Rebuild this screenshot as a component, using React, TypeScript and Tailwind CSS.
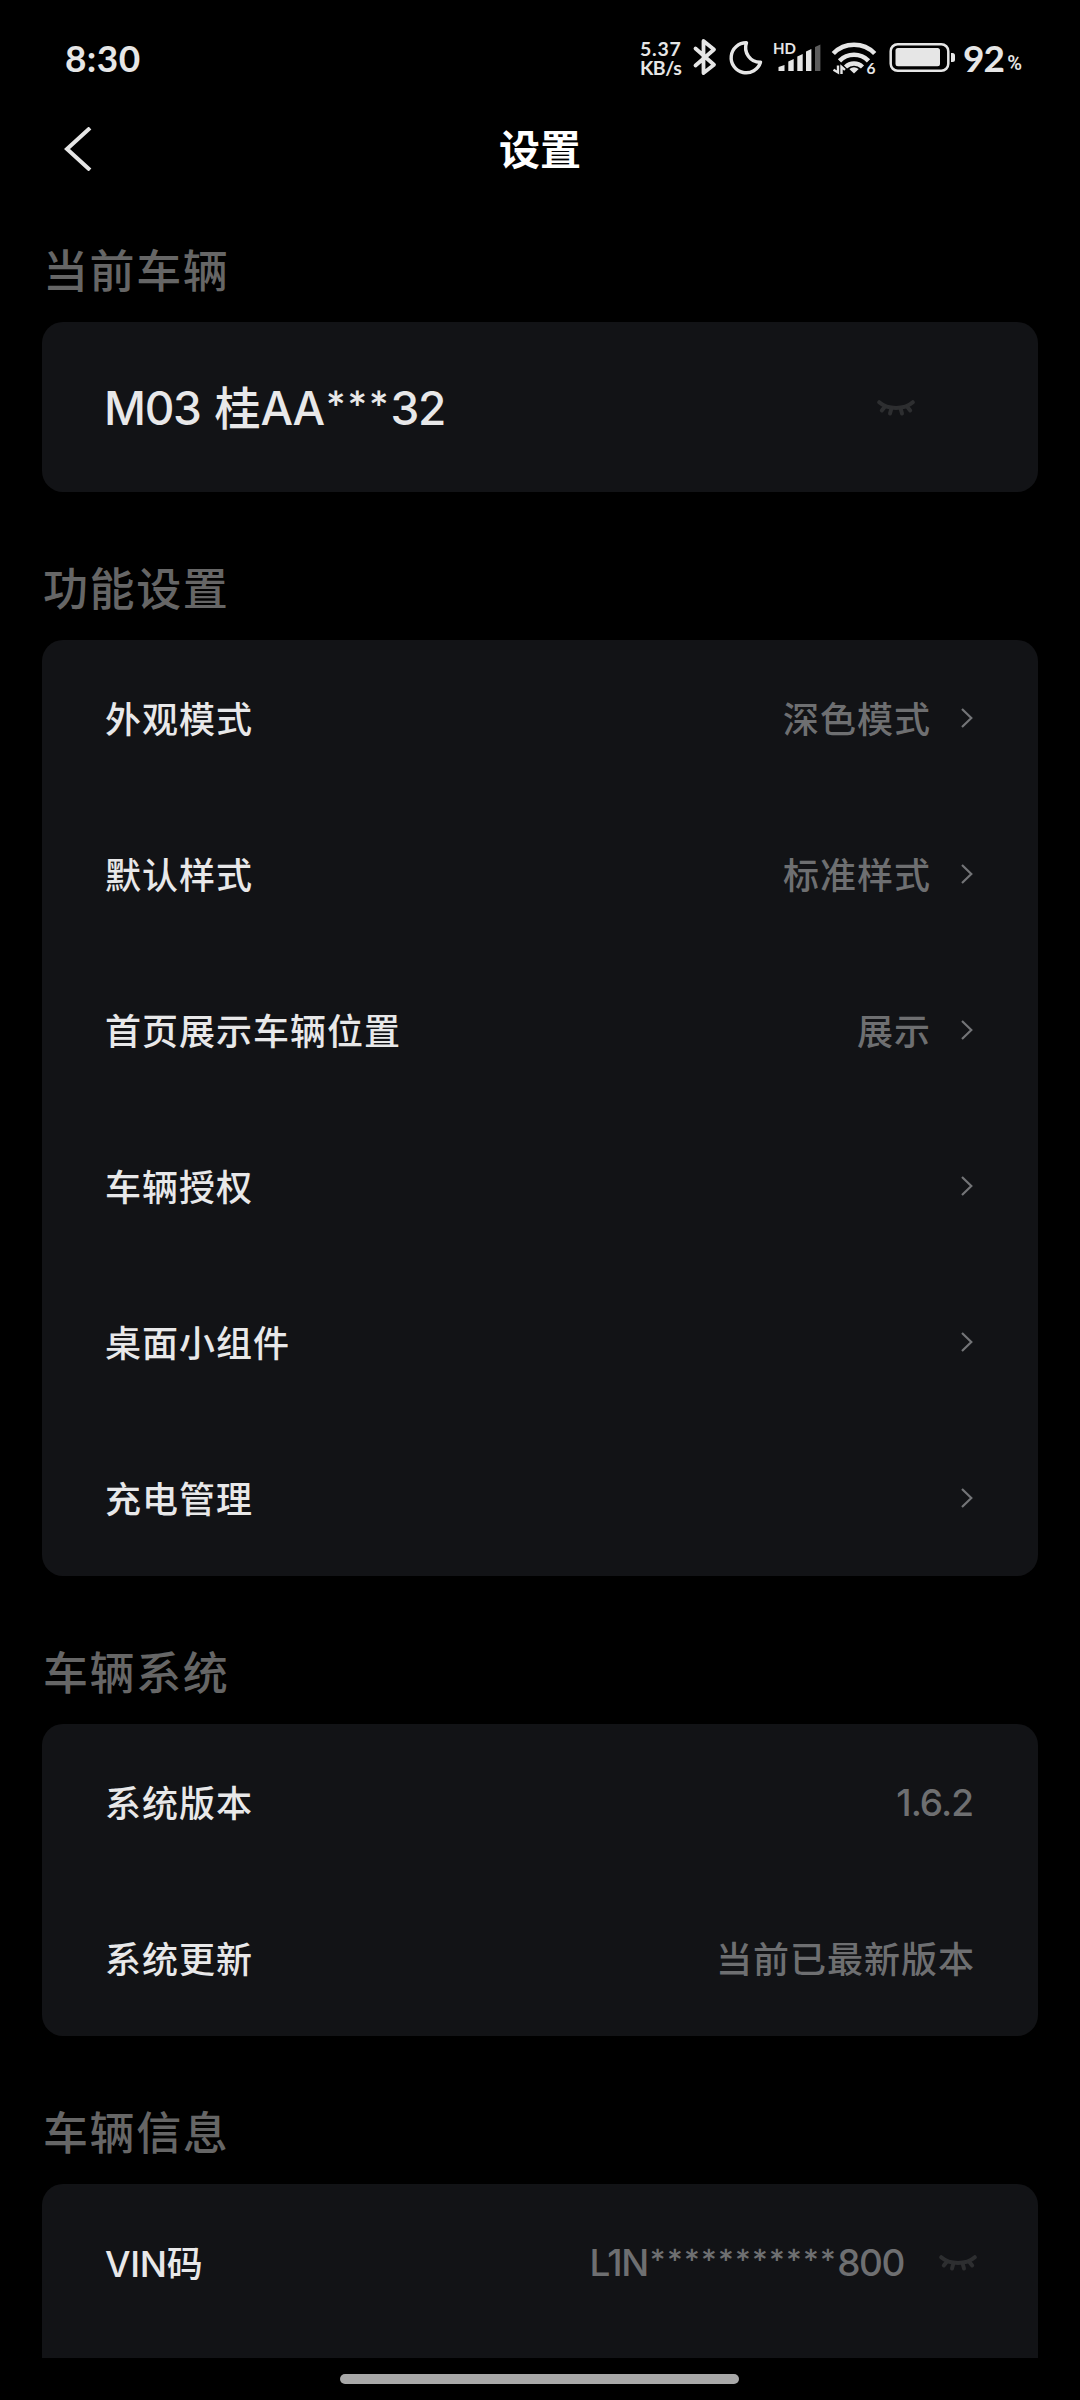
import type { ReactNode } from "react";

type SettingRow = {
  label: string;
  value?: string;
  arrow?: boolean;
};

const featureRows: SettingRow[] = [
  { label: "外观模式", value: "深色模式", arrow: true },
  { label: "默认样式", value: "标准样式", arrow: true },
  { label: "首页展示车辆位置", value: "展示", arrow: true },
  { label: "车辆授权", arrow: true },
  { label: "桌面小组件", arrow: true },
  { label: "充电管理", arrow: true },
];

function ClosedEye() {
  return (
    <svg className="mt-[2px]" width="38" height="16" viewBox="0 0 38 16" fill="none" stroke="#2d2e30" strokeWidth="4" strokeLinecap="round">
      <path d="M2.2 2.2C6.5 6 12.5 7.9 19 7.9S31.500 6 35.800 2.200" />
      <path d="M8 6.500L4.800 10.500M14.500 8L13 13.500M23.500 8L25 13.500M30 6.500L33.200 10.500" />
    </svg>
  );
}

function Chevron() {
  return (
    <svg width="12" height="20" viewBox="0 0 12 20" fill="none" stroke="#737477" strokeWidth="2.2">
      <path d="M1 1L10.300 10L1 19" />
    </svg>
  );
}

function StatusBar() {
  return (
    <div className="flex h-[116px] shrink-0 items-start justify-between pl-[65px] pr-[58px] pt-[36px] text-[#e6e6e6]">
      <span className="text-[37px] font-bold leading-[44px] tracking-[0.4px]">8:30</span>
      <div className="flex h-[44px] items-start">
        <div className="w-[52px] pt-[3px] text-[19.500px] font-bold leading-[19px]">
          <div className="tracking-[0.8px]">5.37</div>
          <div className="tracking-[-0.4px]">KB/s</div>
        </div>
        <svg width="269" height="44" viewBox="692 36 269 44" fill="none" stroke="#e6e6e6">
          {/* bluetooth */}
          <path d="M695.500 48.500L714 64.800L703.500 73V41L714 49.500L695.500 65.500" strokeWidth="3.800" strokeLinejoin="round" strokeLinecap="round" />
          {/* do not disturb */}
          <path d="M746.500 42.800A15 15 0 1 0 760.500 62.200A14.500 14.500 0 0 1 746.500 42.800Z" strokeWidth="3.400" strokeLinejoin="round" />
          {/* signal */}
          <g stroke="none" fill="#e6e6e6">
            <text x="773" y="54" fontSize="15" fontWeight="700">HD</text>
            <path d="M778.500 67l6-2v6h-6z" />
            <path d="M788.300 61.500l5.400-2.500v12h-5.400z" />
            <path d="M797.300 56.500l5.400-2.500v17h-5.400z" />
            <path d="M806 51.500l5.400-2.500v22h-5.400z" />
            <path d="M815 47l5.400-2.500v26.500h-5.400z" fill="#5c5c5c" />
          </g>
          {/* wifi */}
          <path d="M833.300 53.500A29 29 0 0 1 874.700 53.500" strokeWidth="4.600" />
          <path d="M839.500 60.800A20.500 20.500 0 0 1 868.500 60.800" strokeWidth="4.600" />
          <path d="M845.500 67A12 12 0 0 1 862.500 67" strokeWidth="4.400" />
          <path d="M854 73.500L849.300 69Q854 65.500 858.700 69Z" stroke="none" fill="#e6e6e6" />
          <path d="M838 65.500V72.500L833.500 69.800M841.500 74V66.800L845 69.800" strokeWidth="2.400" />
          <text x="866.500" y="74" fontSize="15.500" fontWeight="700" stroke="none" fill="#e6e6e6">6</text>
          {/* battery */}
          <rect x="890.700" y="44.200" width="57.600" height="26.600" rx="7" strokeWidth="2.500" />
          <rect x="895.500" y="48" width="44.500" height="18.300" rx="2.500" stroke="none" fill="#e6e6e6" />
          <path d="M951 53h1.500q2.500 0 2.500 2.500v4q0 2.500-2.500 2.500h-1.500z" stroke="none" fill="#e6e6e6" />
        </svg>
        <span className="pl-[2px] text-[37px] font-bold leading-[44px] tracking-[-0.8px]">92</span>
        <span className="mt-[14px] pl-[3px] font-[Roboto] text-[20px] font-semibold leading-[26px]">%</span>
      </div>
    </div>
  );
}

function Section({ title, children }: { title: string; children: ReactNode }) {
  return (
    <section className="shrink-0">
      <h2 className="flex h-[148px] items-center pl-px pt-[46px] text-[45px] font-medium leading-[60px] tracking-[1.6px] text-[#666666]">
        {title}
      </h2>
      <div className="rounded-[21px] bg-[#121316]">{children}</div>
    </section>
  );
}

function Row({ label, children }: { label: ReactNode; children?: ReactNode }) {
  return (
    <div className="flex h-[156px] items-center justify-between pl-[63px] pr-[65px] text-[36px] font-medium tracking-[1px]">
      <span className="mt-[2px] text-[#e8e8e9]">{label}</span>
      <div className="flex items-center text-[#6e6f71]">{children}</div>
    </div>
  );
}

export default function App() {
  return (
    <div className="flex h-[2400px] w-[1080px] flex-col overflow-hidden bg-black font-[Lato,'Noto_Sans_CJK_SC',sans-serif]">
      <StatusBar />

      <header className="grid h-[66px] shrink-0 grid-cols-3 items-center px-[64px]">
        <svg width="28" height="44" viewBox="0 0 28 44" fill="none" stroke="#e6e6e6" strokeWidth="4">
          <path d="M26 1L3 22L26 43" />
        </svg>
        <h1 className="mt-px text-center text-[41px] font-bold leading-[60px] text-white">设置</h1>
      </header>

      <main className="-mt-2 flex h-[2184px] shrink-0 flex-col overflow-hidden px-[42px]">
        <Section title="当前车辆">
          <div className="flex h-[170px] items-center justify-between pl-[62px] pr-[123px]">
            <span className="mt-[2px] font-[Inter,'Noto_Sans_CJK_SC',sans-serif] text-[46px] font-medium leading-[60px] tracking-[-1.3px] text-[#e8e8e9]">
              M03 <span className="ml-[3px] tracking-normal">桂</span>AA
              <span className="ml-[2px] font-[Lato] font-bold tracking-[2px]">***</span>32
            </span>
            <ClosedEye />
          </div>
        </Section>

        <Section title="功能设置">
          {featureRows.map((row) => (
            <Row key={row.label} label={row.label}>
              {row.value && <span className="mt-[2px]">{row.value}</span>}
              {row.arrow && (
                <span className="ml-[30px]">
                  <Chevron />
                </span>
              )}
            </Row>
          ))}
        </Section>

        <Section title="车辆系统">
          <Row label="系统版本">
            <span className="mt-[2px] font-[Inter] text-[37px] tracking-[-1px]">1.6.2</span>
          </Row>
          <Row label="系统更新">
            <span className="-mr-[2px] mt-[2px]">当前已最新版本</span>
          </Row>
        </Section>

        <Section title="车辆信息">
          <Row
            label={
              <>
                <span className="font-[Inter] tracking-[-0.3px]">VIN</span>码
              </>
            }
          >
            <span className="mt-px font-[Inter] text-[37px] tracking-[-1.4px]">
              L1N<span className="ml-[2px] font-[Lato] font-bold tracking-[1.3px]">***********</span>800
            </span>
            <span className="-mr-[4px] ml-[35px]">
              <ClosedEye />
            </span>
          </Row>
          <Row label="" />
        </Section>
      </main>

      {/* gesture bar */}
      <div className="ml-[340px] mt-[16px] h-[10px] w-[399px] shrink-0 rounded-full bg-[#a8a8a8]" />
    </div>
  );
}
